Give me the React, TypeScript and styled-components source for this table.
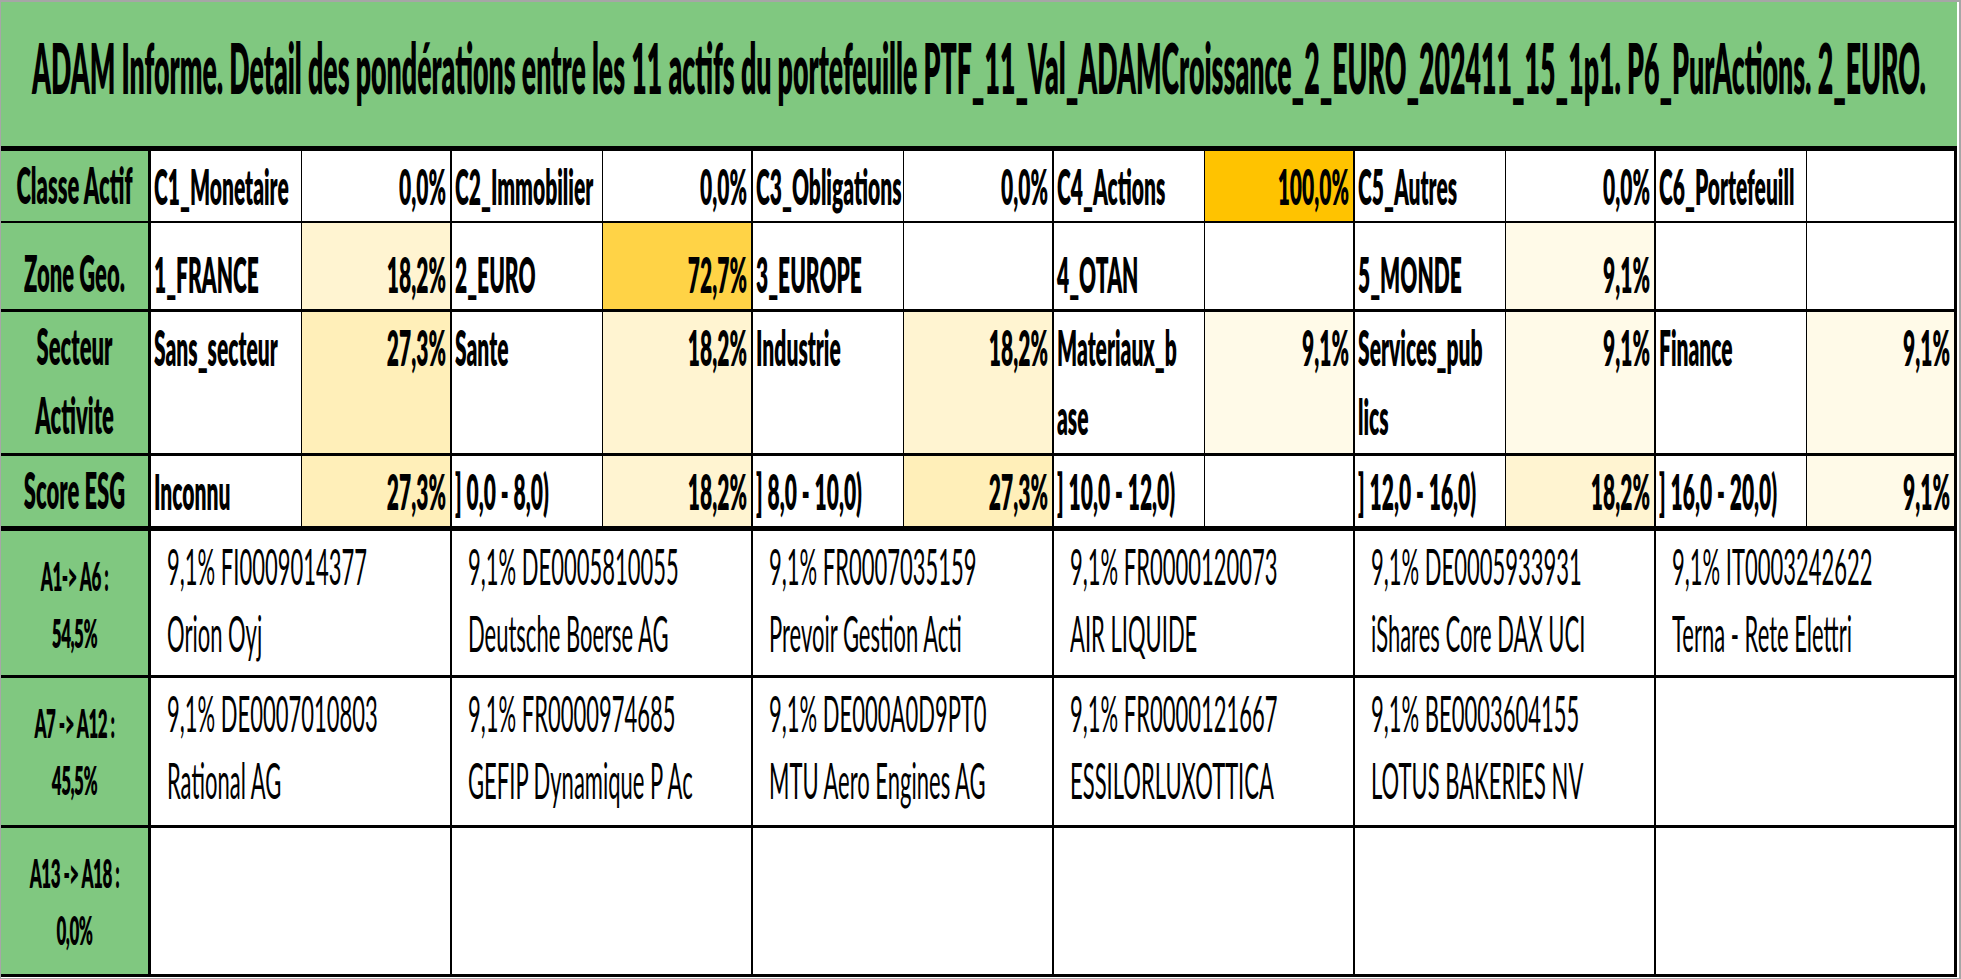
import React from 'react';
import styled, { createGlobalStyle } from 'styled-components';

// the sheet is rendered with a tall, narrow face: every text run is stretched vertically
const STRETCH = 2.3;
const GREEN = '#80c880';

const GlobalStyle = createGlobalStyle`
  *, *::before, *::after { box-sizing: border-box; }
  html, body { margin: 0; padding: 0; background: #fff; }
  body { font-family: Lato, "Open Sans", sans-serif; color: #000; }
`;

const Frame = styled.div`
  width: 1961px;
  height: 979px;
  border-top: 2px solid #a6a6a6;
  border-left: 1px solid #a6a6a6;
  border-right: 2px solid #a6a6a6;
  border-bottom: 1px solid #a6a6a6;
  padding: 0 2px 1px 0;
  background: #fff;
  overflow: hidden;
`;

const Sheet = styled.div`
  display: flex;
  flex-direction: column;
`;

const Banner = styled.div`
  height: 149px;
  background: ${GREEN};
  border-bottom: 5px solid #000;
  text-align: center;
  overflow: hidden;
`;

const Txt = styled.span<{
  $size: number;
  $lh: number;
  $mt: number;
  $weight: number;
  $stretch: number;
  $track: number;
}>`
  display: block;
  margin-top: ${(p) => p.$mt}px;
  font-size: ${(p) => p.$size}px;
  line-height: ${(p) => p.$lh}px;
  font-weight: ${(p) => p.$weight};
  letter-spacing: ${(p) => p.$track}px;
  white-space: nowrap;
  transform: scaleY(${(p) => p.$stretch});
  transform-origin: 0 0;
`;

const Row = styled.div<{ $cols: number; $h: number; $b: number }>`
  display: grid;
  grid-template-columns: 150px repeat(${(p) => p.$cols}, minmax(0, 1fr));
  height: ${(p) => p.$h}px;
  border-bottom: ${(p) => p.$b}px solid #000;
`;

const Label = styled.div`
  background: ${GREEN};
  border-right: 3px solid #000;
  text-align: center;
  overflow: hidden;
`;

const Key = styled.div`
  border-right: 1px solid #000;
  padding-left: 3px;
  overflow: hidden;
`;

const Value = styled.div<{ $fill: string; $last?: boolean }>`
  background: ${(p) => p.$fill};
  border-right: ${(p) => (p.$last ? 3 : 2)}px solid #000;
  padding-right: 4px;
  text-align: right;
  overflow: hidden;
`;

const Asset = styled.div<{ $last?: boolean }>`
  border-right: ${(p) => (p.$last ? 3 : 2)}px solid #000;
  padding-left: 16px;
  overflow: hidden;
`;

type Pair = { k: string[]; v: string };

const fill = (v: string) => {
  if (!v) return '#fff';
  const n = parseFloat(v.replace(',', '.')) / 100;
  if (!n) return '#fff';
  return `rgb(255, ${Math.round(255 - n * 60)}, ${Math.round(255 - n * 255)})`;
};

const groups: { label: string[]; h: number; b: number; mt: number; pairs: Pair[] }[] = [
  {
    label: ['Classe Actif'],
    h: 72,
    b: 2,
    mt: 1,
    pairs: [
      { k: ['C1_Monetaire'], v: '0,0%' },
      { k: ['C2_Immobilier'], v: '0,0%' },
      { k: ['C3_Obligations'], v: '0,0%' },
      { k: ['C4_Actions'], v: '100,0%' },
      { k: ['C5_Autres'], v: '0,0%' },
      { k: ['C6_Portefeuill'], v: '' },
    ],
  },
  {
    label: ['Zone Geo.'],
    h: 89,
    b: 3,
    mt: 17,
    pairs: [
      { k: ['1_FRANCE'], v: '18,2%' },
      { k: ['2_EURO'], v: '72,7%' },
      { k: ['3_EUROPE'], v: '' },
      { k: ['4_OTAN'], v: '' },
      { k: ['5_MONDE'], v: '9,1%' },
      { k: [''], v: '' },
    ],
  },
  {
    label: ['Secteur', 'Activite'],
    h: 144,
    b: 3,
    mt: 1,
    pairs: [
      { k: ['Sans_secteur'], v: '27,3%' },
      { k: ['Sante'], v: '18,2%' },
      { k: ['Industrie'], v: '18,2%' },
      { k: ['Materiaux_b', 'ase'], v: '9,1%' },
      { k: ['Services_pub', 'lics'], v: '9,1%' },
      { k: ['Finance'], v: '9,1%' },
    ],
  },
  {
    label: ['Score ESG'],
    h: 75,
    b: 5,
    mt: 1,
    pairs: [
      { k: ['Inconnu'], v: '27,3%' },
      { k: ['] 0,0 - 8,0)'], v: '18,2%' },
      { k: ['] 8,0 - 10,0)'], v: '27,3%' },
      { k: ['] 10,0 - 12,0)'], v: '' },
      { k: ['] 12,0 - 16,0)'], v: '18,2%' },
      { k: ['] 16,0 - 20,0)'], v: '9,1%' },
    ],
  },
];

const assets: { label: string[]; h: number; items: string[][] }[] = [
  {
    label: ['A1-> A6 :', '54,5%'],
    h: 147,
    items: [
      ['9,1% FI0009014377', 'Orion Oyj'],
      ['9,1% DE0005810055', 'Deutsche Boerse AG'],
      ['9,1% FR0007035159', 'Prevoir Gestion Acti'],
      ['9,1% FR0000120073', 'AIR LIQUIDE'],
      ['9,1% DE0005933931', 'iShares Core DAX UCI'],
      ['9,1% IT0003242622', 'Terna - Rete Elettri'],
    ],
  },
  {
    label: ['A7 -> A12 :', '45,5%'],
    h: 150,
    items: [
      ['9,1% DE0007010803', 'Rational AG'],
      ['9,1% FR0000974685', 'GEFIP Dynamique P Ac'],
      ['9,1% DE000A0D9PT0', 'MTU Aero Engines AG'],
      ['9,1% FR0000121667', 'ESSILORLUXOTTICA'],
      ['9,1% BE0003604155', 'LOTUS BAKERIES NV'],
      [],
    ],
  },
  {
    label: ['A13 -> A18 :', '0,0%'],
    h: 149,
    items: [[], [], [], [], [], []],
  },
];

type LinesProps = {
  lines: string[];
  size: number;
  lh: number;
  mt: number;
  weight?: number;
  stretch?: number;
  track?: number;
};

const Lines = ({ lines, size, lh, mt, weight = 800, stretch = STRETCH, track = 0 }: LinesProps) => (
  <Txt $size={size} $lh={lh} $mt={mt} $weight={weight} $stretch={stretch} $track={track}>
    {lines.map((l, i) => (
      <React.Fragment key={i}>
        {i > 0 && <br />}
        {l || '\u00a0'}
      </React.Fragment>
    ))}
  </Txt>
);

const App = () => (
  <>
    <GlobalStyle />
    <Frame>
      <Sheet>
        <Banner>
          <Lines
            size={26.7}
            lh={32}
            mt={24}
            stretch={2.6}
            lines={[
              'ADAM Informe. Detail des pondérations entre les 11 actifs du portefeuille PTF_11_Val_ADAMCroissance_2_EURO_202411_15_1p1. P6_PurActions. 2_EURO.',
            ]}
          />
        </Banner>
        {groups.map((g) => (
          <Row key={g.label[0]} $cols={12} $h={g.h} $b={g.b}>
            <Label>
              <Lines size={22} lh={29.6} mt={g.mt - 1} lines={g.label} />
            </Label>
            {g.pairs.map((p, i) => (
              <React.Fragment key={i}>
                <Key>
                  <Lines size={21} lh={29.6} mt={g.mt} lines={p.k} />
                </Key>
                <Value $fill={fill(p.v)} $last={i === g.pairs.length - 1}>
                  <Lines size={21} lh={29.6} mt={g.mt} lines={[p.v]} />
                </Value>
              </React.Fragment>
            ))}
          </Row>
        ))}
        {assets.map((a) => (
          <Row key={a.label[0]} $cols={6} $h={a.h} $b={3}>
            <Label>
              <Lines size={17} lh={25.2} mt={16} track={-0.5} lines={a.label} />
            </Label>
            {a.items.map((it, i) => (
              <Asset key={i} $last={i === a.items.length - 1}>
                {it.length > 0 && <Lines weight={400} size={22} lh={29.1} mt={1} lines={it} />}
              </Asset>
            ))}
          </Row>
        ))}
      </Sheet>
    </Frame>
  </>
);

export default App;
